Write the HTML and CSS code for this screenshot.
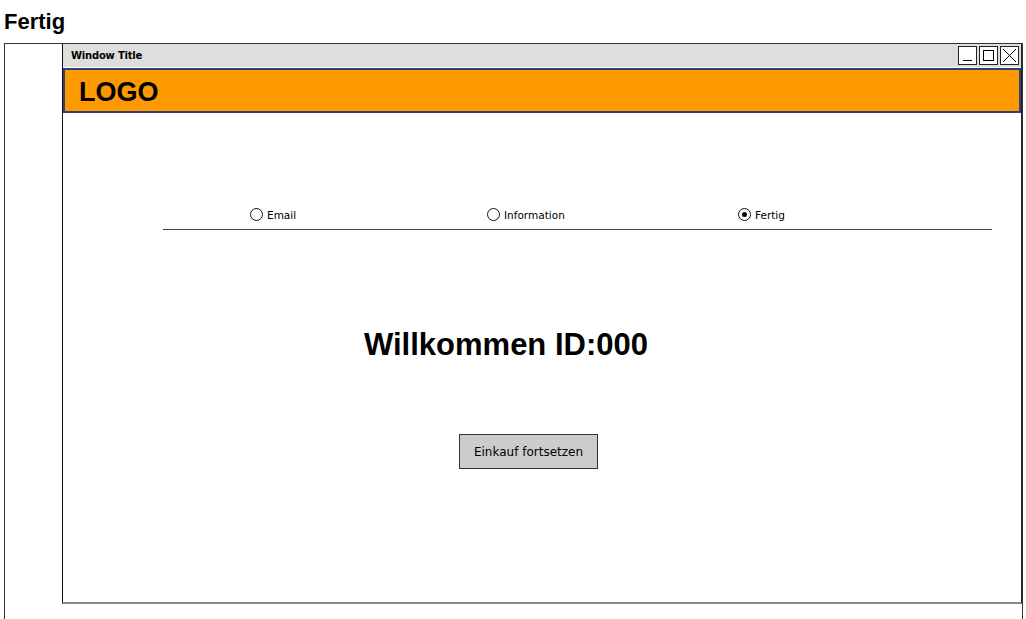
FILE: index.html
```html
<!DOCTYPE html>
<html lang="de">
<head>
<meta charset="utf-8">
<title>Fertig</title>
<link rel="stylesheet" href="styles.css">
</head>
<body>
<h1 class="page-title">Fertig</h1>
<div class="frame">
  <div class="window">
    <div class="titlebar">
      <span class="title-text">Window Title</span>
      <div class="win-buttons">
        <span class="win-btn"><svg width="17" height="17" viewBox="0 0 17 17"><line x1="4" y1="13.5" x2="13" y2="13.5" stroke="#000" stroke-width="1"/></svg></span>
        <span class="win-btn"><svg width="17" height="17" viewBox="0 0 17 17"><rect x="3.5" y="3.5" width="10" height="10" fill="none" stroke="#000" stroke-width="1"/></svg></span>
        <span class="win-btn"><svg width="17" height="17" viewBox="0 0 17 17"><line x1="2" y1="2" x2="15" y2="15" stroke="#000" stroke-width="1"/><line x1="15" y1="2" x2="2" y2="15" stroke="#000" stroke-width="1"/></svg></span>
      </div>
    </div>
    <div class="header"><span class="logo">LOGO</span></div>
    <div class="content">
      <div class="steps">
        <label class="step step-email"><span class="radio"></span><span class="step-label">Email</span></label>
        <label class="step step-info"><span class="radio"></span><span class="step-label">Information</span></label>
        <label class="step"><span class="radio radio-on"></span><span class="step-label">Fertig</span></label>
      </div>
      <h2 class="welcome">Willkommen ID:000</h2>
      <div class="actions"><button class="btn" type="button">Einkauf fortsetzen</button></div>
    </div>
  </div>
</div>
</body>
</html>
```

FILE: styles.css
```css
html, body {
  margin: 0;
  padding: 0;
  background: #fff;
  font-family: "Liberation Sans", Arial, sans-serif;
  color: #000;
  overflow: hidden;
}
.page-title {
  margin: 0;
  padding: 9px 0 0 4px;
  height: 25px;
  line-height: 25px;
  font-size: 22px;
  font-weight: bold;
}
.frame {
  margin: 9px 0 0 4px;
  width: 1017px;
  height: 600px;
  border-left: 1px solid #333;
  border-top: 1px solid #333;
  border-right: 1px solid #333;
}
.window {
  margin-left: 57px;
  width: 958px;
  height: 558px;
  border-left: 1px solid #111;
  border-right: 1px solid #222;
  border-bottom: 2px solid #888;
  display: flex;
  flex-direction: column;
}
.titlebar {
  height: 23px;
  background: #dedede;
  display: flex;
  align-items: center;
  justify-content: space-between;
  padding: 0 2px 0 8px;
}
.title-text {
  font-family: "DejaVu Sans", sans-serif;
  font-size: 10px;
  font-weight: bold;
  letter-spacing: -0.2px;
}
.win-buttons {
  display: flex;
  gap: 2px;
}
.win-btn {
  width: 17px;
  height: 17px;
  border: 1px solid #222;
  background: #fff;
  display: block;
}
.win-btn svg { display: block; }
.header {
  height: 41px;
  margin-top: 1px;
  background: #ff9900;
  border: 2px solid #2f3f7a;
  display: flex;
  align-items: center;
  padding-left: 14px;
}
.logo {
  font-size: 27px;
  font-weight: bold;
  line-height: 30px;
  margin-top: 3px;
}
.content {
  flex: 1;
  display: flex;
  flex-direction: column;
}
.steps {
  margin: 92px 0 0 100px;
  width: 829px;
  height: 25px;
  border-bottom: 1px solid #444;
  display: flex;
  align-items: flex-start;
  padding: 3px 0 0 87px;
  box-sizing: border-box;
}
.step {
  display: flex;
  align-items: center;
  gap: 4px;
  font-family: "DejaVu Sans", sans-serif;
  font-size: 10.5px;
}
.step-email { width: 237px; }
.step-info { width: 251px; }
.radio {
  width: 11px;
  height: 11px;
  border: 1px solid #111;
  border-radius: 50%;
  position: relative;
  box-sizing: content-box;
}
.radio-on::after {
  content: "";
  position: absolute;
  left: 3px;
  top: 3px;
  width: 5px;
  height: 5px;
  border-radius: 50%;
  background: #000;
}
.welcome {
  margin: 97px 0 0 301px;
  font-size: 31px;
  font-weight: bold;
  line-height: 35px;
}
.actions {
  margin: 72px 0 0 396px;
}
.btn {
  width: 139px;
  height: 35px;
  background: #cccccc;
  border: 1px solid #333;
  font-family: "DejaVu Sans", sans-serif;
  font-size: 12px;
  color: #000;
  padding: 0;
}
```
